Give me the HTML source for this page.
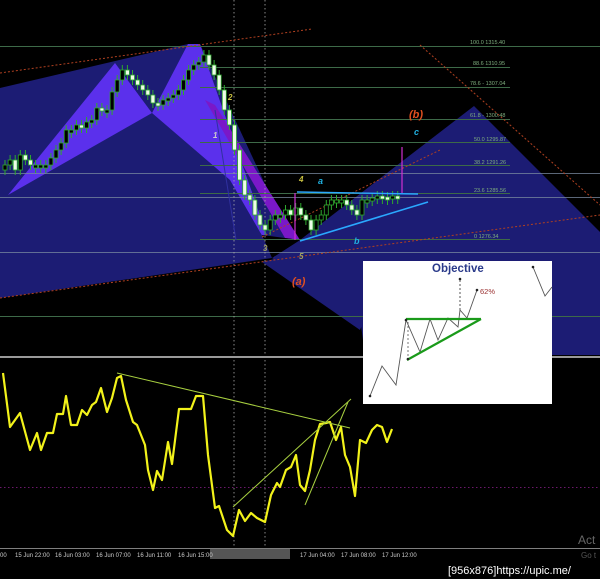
<!DOCTYPE html>
<html><head><meta charset="utf-8"><style>
html,body{margin:0;padding:0;background:#000;width:600px;height:579px;overflow:hidden}
svg{display:block}
text{font-family:"Liberation Sans",sans-serif}
</style></head><body>
<svg id="s" width="600" height="579" viewBox="0 0 600 579" xmlns="http://www.w3.org/2000/svg">
<rect width="600" height="579" fill="#000"/>
<polygon points="0,88 188,44 200,44 290,238 272,258 0,298" fill="#1c1c74"/>
<polygon points="272,258 300,240 474,106 600,232 600,355 365,355 360,318" fill="#1c1c74"/>
<polygon points="262,262 278,258 365,318 360,330" fill="#1c1c74"/>
<polygon points="8,195 115,63 152,113" fill="#5b30ec"/>
<polygon points="152,113 188,44 200,44 275,258 230,180" fill="#5b30ec"/>
<polygon points="205,100 215,105 300,240 285,238" fill="#7a18c8"/>
<polygon points="262,235 300,240 272,258" fill="#000"/>
<g stroke="#3d6a48" stroke-width="1">
<line x1="0" y1="46.5" x2="600" y2="46.5"/>
<line x1="200" y1="67.5" x2="510" y2="67.5"/>
<line x1="200" y1="87.5" x2="510" y2="87.5"/>
<line x1="200" y1="119.5" x2="510" y2="119.5"/>
<line x1="200" y1="142.5" x2="510" y2="142.5"/>
<line x1="200" y1="165.5" x2="510" y2="165.5"/>
<line x1="200" y1="193.5" x2="510" y2="193.5"/>
<line x1="200" y1="239.5" x2="510" y2="239.5"/>
<line x1="0" y1="316.5" x2="600" y2="316.5"/>
</g>
<g stroke="#7a8aa0" stroke-width="0.8">
<line x1="0" y1="173.5" x2="600" y2="173.5"/>
<line x1="0" y1="197.5" x2="600" y2="197.5"/>
<line x1="0" y1="252.5" x2="600" y2="252.5"/>
</g>
<g fill="#7fae7f" font-size="5.5">
<text x="470" y="44">100.0 1315.40</text>
<text x="473" y="65">88.6 1310.95</text>
<text x="470" y="85">78.6 - 1307.04</text>
<text x="470" y="117">61.8 - 1300.48</text>
<text x="474" y="141">50.0 1295.87</text>
<text x="474" y="164">38.2 1291.26</text>
<text x="474" y="192">23.6 1285.56</text>
<text x="474" y="238">0 1276.34</text>
</g>
<g stroke="#aaa" stroke-width="0.8" stroke-dasharray="1.5,2.5">
<line x1="234" y1="0" x2="234" y2="548"/>
<line x1="265" y1="0" x2="265" y2="548"/>
</g>
<g stroke="#b04020" stroke-width="1" stroke-dasharray="2,2">
<line x1="0" y1="73" x2="312" y2="29"/>
<line x1="0" y1="298" x2="600" y2="215"/>
<line x1="420" y1="45" x2="600" y2="205"/>
<line x1="262" y1="237" x2="440" y2="150"/>
</g>
<g id="candles"></g>
<line x1="300" y1="241" x2="428" y2="202" stroke="#2aa8ff" stroke-width="1.6"/>
<line x1="297" y1="192" x2="418" y2="194" stroke="#2aa8ff" stroke-width="1.4"/>
<line x1="402" y1="147" x2="402" y2="193" stroke="#d030d0" stroke-width="1.2"/>
<line x1="295" y1="193" x2="295" y2="240" stroke="#d030d0" stroke-width="1.2"/>
<line x1="215" y1="110" x2="236" y2="240" stroke="#3030a0" stroke-width="1"/>
<g font-weight="bold" font-style="italic">
<text x="409" y="118" fill="#e05020" font-size="11">(b)</text>
<text x="414" y="135" fill="#20b0e0" font-size="9">c</text>
<text x="299" y="182" fill="#c8c040" font-size="8">4</text>
<text x="318" y="184" fill="#20b0e0" font-size="9">a</text>
<text x="354" y="244" fill="#20b0e0" font-size="9">b</text>
<text x="263" y="251" fill="#a0a060" font-size="8">3</text>
<text x="299" y="259" fill="#a0a060" font-size="8">5</text>
<text x="292" y="285" fill="#e05020" font-size="11">(a)</text>
<text x="213" y="138" fill="#ccc" font-size="8">1</text>
<text x="228" y="100" fill="#c8c040" font-size="8">2</text>
</g>
<rect x="0" y="356" width="600" height="2" fill="#999"/>
<rect x="363" y="261" width="189" height="143" fill="#fff"/>
<text x="432" y="272" fill="#2a3a8a" font-size="11.5" font-weight="bold">Objective</text>
<polyline points="370,396 382,366 396,385 406,320 420,352 430,319 438,340 448,318 458,327 460,310 467,318 477,290" fill="none" stroke="#555" stroke-width="0.9"/>
<polyline points="533,267 545,296 552,287" fill="none" stroke="#555" stroke-width="0.9"/>
<line x1="406" y1="319" x2="481" y2="319" stroke="#1a9a1a" stroke-width="2.2"/>
<line x1="407" y1="360" x2="481" y2="319" stroke="#1a9a1a" stroke-width="2.2"/>
<line x1="460" y1="280" x2="460" y2="310" stroke="#555" stroke-dasharray="2,2"/>
<line x1="408" y1="322" x2="408" y2="358" stroke="#777" stroke-dasharray="2,2"/>
<g fill="#222"><circle cx="370" cy="396" r="1.3"/><circle cx="460" cy="279" r="1.3"/><circle cx="477" cy="290" r="1.3"/><circle cx="533" cy="267" r="1.3"/><circle cx="406" cy="320" r="1.3"/><circle cx="408" cy="359" r="1.3"/></g>
<text x="480" y="294" fill="#9a3030" font-size="7.5">62%</text>
<line x1="0" y1="487.5" x2="600" y2="487.5" stroke="#902090" stroke-width="0.8" stroke-dasharray="1.5,2.5"/>
<polyline fill="none" stroke="#f2f21a" stroke-width="2.2" stroke-linejoin="round" points="3,373 10,427 20,413 30,450 37,433 41,450 47,433 53,433 57,414 63,414 66,396 71,425 77,425 82,410 87,415 92,405 96,402 101,388 107,412 112,398 117,378 121,376 126,400 133,422 137,425 145,445 148,470 153,490 157,471 162,480 168,442 172,464 179,409 185,409 191,409 196,396 203,396 208,455 215,508 219,506 227,530 233,536 239,510 245,521 251,513 257,518 265,522 271,495 277,483 280,487 286,470 291,467 296,455 300,485 305,491 310,470 315,440 320,424 326,423 330,422 336,440 341,427 345,455 350,467 355,496 360,440 366,443 372,430 377,425 382,427 387,442 392,429"/>
<g stroke="#a8d040" stroke-width="1">
<line x1="117" y1="373" x2="350" y2="428"/>
<line x1="233" y1="507" x2="351" y2="399"/>
<line x1="305" y1="505" x2="348" y2="402"/>
</g>
<line x1="0" y1="548.5" x2="600" y2="548.5" stroke="#aaa" stroke-width="0.8"/>
<rect x="210" y="549" width="80" height="10" fill="#555"/>
<g fill="#ccc" font-size="6">
<text x="0" y="557">00</text>
<text x="15" y="557">15 Jun 22:00</text>
<text x="55" y="557">16 Jun 03:00</text>
<text x="96" y="557">16 Jun 07:00</text>
<text x="137" y="557">16 Jun 11:00</text>
<text x="178" y="557">16 Jun 15:00</text>
<text x="300" y="557">17 Jun 04:00</text>
<text x="341" y="557">17 Jun 08:00</text>
<text x="382" y="557">17 Jun 12:00</text>
</g>
<text x="578" y="544" fill="#666" font-size="12">Act</text>
<text x="581" y="558" fill="#555" font-size="8">Go t</text>
<text x="448" y="574" fill="#fff" font-size="11" font-family="Liberation Mono, monospace">[956x876]https://upic.me/</text>
</svg>
<script>
(function(){
var c=[165,160,170,155,160,165,165,165,165,158,150,143,130,130,125,128,122,120,108,110,110,92,80,70,75,80,85,90,95,103,105,100,98,95,90,80,70,65,62,55,65,75,90,110,125,150,180,195,200,215,225,230,220,215,215,210,215,208,215,220,230,220,215,205,200,200,200,205,210,215,200,200,198,196,197,198,196,197];
var g=document.getElementById('candles'),h='',x=5,dx=5.1,prev=c[0]+5;
for(var i=0;i<c.length;i++){var o=prev,cl=c[i],t=Math.min(o,cl),b=Math.max(o,cl);if(b-t<3)b=t+3;var dn=cl>o;
h+='<line x1="'+x+'" y1="'+(t-5)+'" x2="'+x+'" y2="'+(b+5)+'" stroke="#2ea82e" stroke-width="1"/>';
h+='<rect x="'+(x-2)+'" y="'+t+'" width="4" height="'+(b-t)+'" fill="'+(dn?'#eefde8':'#000')+'" stroke="#2ea82e" stroke-width="0.8"/>';
prev=cl;x+=dx;}
g.innerHTML=h;})();
</script>
</body></html>
